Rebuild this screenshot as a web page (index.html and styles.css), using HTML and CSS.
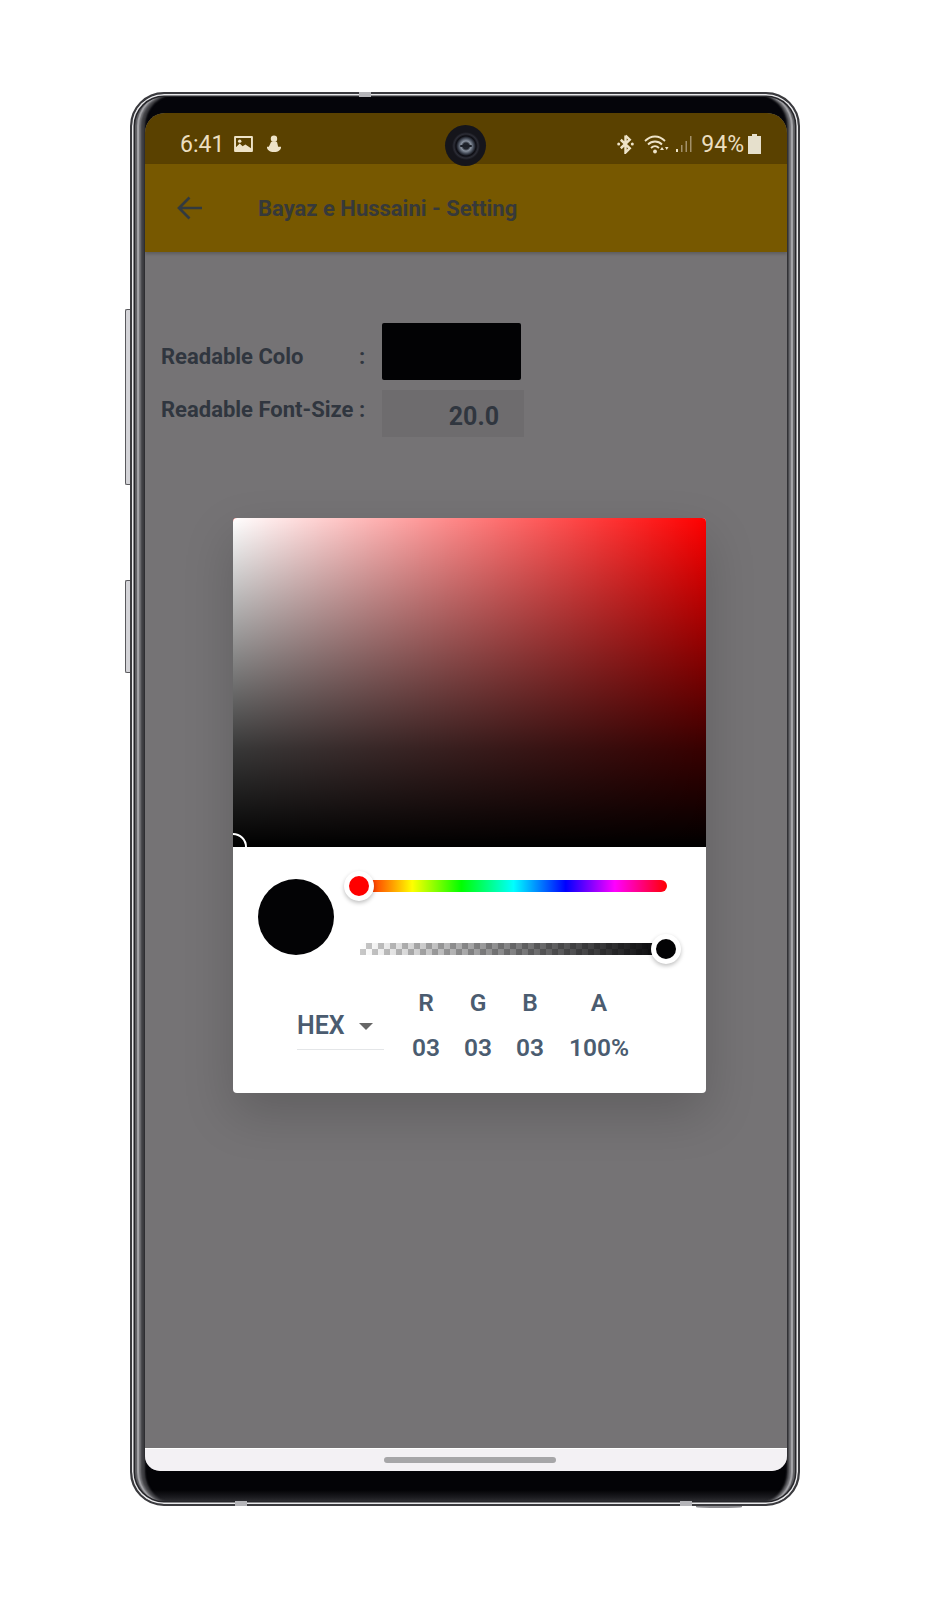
FILE: index.html
```html
<!DOCTYPE html>
<html lang="en">
<head>
<meta charset="utf-8">
<title>Bayaz e Hussaini - Setting</title>
<link rel="stylesheet" href="styles.css">
</head>
<body>
<div class="phone">
  <span class="btn btn-a"></span>
  <span class="btn btn-b"></span>
  <span class="seam seam-top"></span>
  <span class="seam seam-bl"></span>
  <span class="seam seam-br"></span>
  <span class="bulge"></span>
  <div class="screen">
    <div class="status">
      <div class="status-left">
        <span class="time">6:41</span>
        <svg class="ic-img" viewBox="0 0 20 17"><path fill-rule="evenodd" d="M1 0h18a1 1 0 0 1 1 1v15a1 1 0 0 1-1 1H1a1 1 0 0 1-1-1V1a1 1 0 0 1 1-1zM2 2v10l4-4 3 3 3-2 6 4V2z" fill="#eee3c8"/><circle cx="6" cy="5.500" r="1.800" fill="#eee3c8"/></svg>
        <svg class="ic-fig" viewBox="0 0 18 20"><circle cx="9" cy="4" r="3.600" fill="#eee3c8"/><path d="M5.500 8c2-1.500 5-1.500 7 0l1 4.500c.5 4-10.500 4-10 0z" fill="#eee3c8"/><path d="M1 13c0 3.500 3 6 8 6s8-2.500 8-6" fill="#eee3c8"/></svg>
      </div>
      <div class="camera"><span class="lens"><i class="glint"></i></span></div>
      <div class="status-right">
        <svg class="ic-bt" viewBox="0 0 18 21"><path d="M9 1.500v18l4.500-4.500L4 6M9 1.500 13.500 6 4 15" fill="none" stroke="#eee3c8" stroke-width="2.600"/><circle cx="1.800" cy="10.500" r="1.600" fill="#eee3c8"/><circle cx="16.200" cy="10.500" r="1.600" fill="#eee3c8"/></svg>
        <svg class="ic-wifi" viewBox="0 0 25 19"><path d="M1 6c6-6 14-6 20 0M4 9.500c4-4 10-4 14 0M7 13c2.500-2.500 5.500-2.500 8 0" fill="none" stroke="#eee3c8" stroke-width="1.800"/><circle cx="11" cy="16.500" r="1.900" fill="#eee3c8"/><path d="M16 15l2-3 2 3zM21 12h3.500l-1.750 3z" fill="#eee3c8"/></svg>
        <svg class="ic-sig" viewBox="0 0 17 16"><path d="M1 13h2v3H1z" fill="#eee3c8"/><path d="M6 9h1.500v7H6zM10.500 5H12v11h-1.500zM15 0h1.500v16H15z" fill="#a3916a"/></svg>
        <span class="pct">94%</span>
        <svg class="ic-bat" viewBox="0 0 13 20"><path d="M4 0h5v2h4v18H0V2h4z" fill="#e6e0cc"/></svg>
      </div>
    </div>
    <div class="appbar">
      <svg class="back" viewBox="0 0 26 24"><path d="M25 12H2M12.500 1.500 2 12l10.500 10.500" fill="none" stroke="#323a3f" stroke-width="2.700"/></svg>
      <span class="title">Bayaz e Hussaini - Setting</span>
    </div>
    <div class="content">
      <div class="settings">
        <div class="row row-color">
          <span class="lbl lbl-color">Readable Colo</span><span class="lbl colon">:</span>
          <span class="swatch"></span>
        </div>
        <div class="row row-size">
          <span class="lbl lbl-size">Readable Font-Size :</span>
          <span class="field">20.0</span>
        </div>
      </div>
      <div class="dialog">
        <div class="sv"><span class="sv-thumb"></span></div>
        <div class="controls">
          <div class="sliders">
            <span class="preview"></span>
            <div class="tracks">
              <div class="track hue"><span class="thumb thumb-hue"></span></div>
              <div class="track alpha"><span class="thumb thumb-alpha"></span></div>
            </div>
          </div>
          <div class="values">
            <div class="mode"><span>HEX</span><i class="caret"></i></div>
            <div class="channels">
              <div class="ch"><b>R</b><b>03</b></div>
              <div class="ch"><b>G</b><b>03</b></div>
              <div class="ch"><b>B</b><b>03</b></div>
              <div class="ch ch-a"><b>A</b><b>100%</b></div>
            </div>
          </div>
        </div>
      </div>
    </div>
    <div class="navbar"><span class="home"></span></div>
  </div>
</div>
</body>
</html>
```
FILE: styles.css
```css
* { box-sizing: border-box; }
html, body { margin: 0; padding: 0; background: #fff; }
body { width: 927px; height: 1600px; padding: 92px 0 0 130px; font-family: Roboto, "Liberation Sans", sans-serif; overflow: hidden; }
.phone {
  position: relative;
  width: 670px;
  height: 1414px;
  padding: 19px 0 0 13px;
  border-radius: 34px;
  border: 2px solid #3a3a3e;
  background:
    linear-gradient(to top, #3a3a3e 0, #1a1a1e 7px, #030306 14px, #030306 100%) bottom / 100% 34px no-repeat,
    #05050a;
  box-shadow:
    inset 0 0 0 1.500px #e8e8ea,
    inset 0 0 0 3px #26262a,
    inset 5px 0 1px #5c5c60,
    inset 7px 0 1px #a9a9ad,
    inset 9px 0 2px #77777b,
    inset 13px 0 2px #3e3e42,
    inset -5px 0 1px #5c5c60,
    inset -7px 0 1px #a9a9ad,
    inset -9px 0 2px #77777b,
    inset -11px 0 2px #3e3e42;
}
.btn { position: absolute; left: -7px; width: 5px; background: #d4d4d8; border: 1px solid #5a5a5e; border-right: 0; border-radius: 2px 0 0 2px; }
.btn-a { top: 215px; height: 176px; }
.btn-b { top: 486px; height: 93px; }
.seam { position: absolute; width: 12px; height: 5px; background: #b4b4b8; }
.seam-top { top: -2px; left: 227px; }
.seam-bl { bottom: -2px; left: 103px; }
.seam-br { bottom: -2px; left: 548px; }
.bulge { position: absolute; bottom: -4px; left: 564px; width: 46px; height: 2px; background: #8a8a8e; border-radius: 0 0 50% 50%; }
.screen {
  position: relative;
  display: flex; flex-direction: column;
  width: 642px; height: 1358px;
  border-radius: 20px 20px 15px 15px; overflow: hidden; background: #757375;
}
.status { position: relative; flex: 0 0 51px; background: #5a4100; display: flex; align-items: center; justify-content: space-between; padding: 11px 26px 0 35px; color: #eee3c8; }
.status-left, .status-right { display: flex; align-items: center; }
.time { font-size: 23px; width: 44px; color: #ecdfc0; }
.ic-img { width: 19px; height: 16px; margin-left: 10px; }
.ic-fig { width: 16px; height: 18px; margin-left: 13px; }
.camera { position: absolute; left: 300px; top: 12px; width: 41px; height: 41px; border-radius: 50%; background: #15151b; display: flex; align-items: center; justify-content: center; z-index: 2; }
.lens { position: relative; width: 28px; height: 28px; border-radius: 50%; background: radial-gradient(circle, #20242c 0 3px, #8a93a0 5px, #3a404c 8px, #0c0c12 10px, #2c2d36 12px, #15151b 14px); }
.glint { position: absolute; left: 8px; top: 13px; width: 12px; height: 2px; background: #1c2028; border-radius: 1px; }
.ic-bt { width: 17px; height: 20px; }
.ic-wifi { width: 25px; height: 19px; margin-left: 10px; }
.ic-sig { width: 17px; height: 16px; margin-left: 6px; }
.pct { font-size: 23px; margin-left: 9px; color: #ecdfc0; }
.ic-bat { width: 13px; height: 20px; margin-left: 4px; }
.appbar { flex: 0 0 88px; background: #775800; display: flex; align-items: center; padding-left: 32px; box-shadow: 0 2px 3px rgba(0,0,0,.2); z-index: 1; }
.back { width: 26px; height: 24px; }
.title { margin-left: 55px; font-size: 22px; font-weight: 700; color: #36393a; }
.content { flex: 1; position: relative; display: flex; flex-direction: column; }
.settings { padding: 71px 0 0 16px; }
.row { display: flex; }
.row-color { height: 57px; align-items: center; }
.lbl { font-size: 22px; font-weight: 700; color: #30363f; line-height: 26px; }
.lbl-color { width: 198px; padding-top: 10px; line-height: 36px; }
.colon { width: 23px; padding-top: 10px; line-height: 36px; }
.swatch { width: 139px; height: 57px; background: #020204; border-radius: 2px; }
.row-size { margin-top: 10px; }
.lbl-size { width: 221px; padding-top: 7px; }
.field { width: 142px; height: 47px; background: #6e6c6e; padding: 12px 25px 0 0; text-align: right; font-size: 25px; font-weight: 700; color: #30363f; line-height: 29px; }
.dialog { margin: 81px 0 0 88px; width: 473px; height: 575px; background: #fff; border-radius: 4px; overflow: hidden; box-shadow: 0 20px 50px rgba(0,0,0,.18); display: flex; flex-direction: column; }
.sv { position: relative; flex: 0 0 329px; overflow: hidden; background: linear-gradient(to bottom, rgba(0,0,0,0), rgba(0,0,0,.78) 70%, #000), linear-gradient(to right, #fff, rgba(255,255,255,0)), #f00; }
.sv-thumb { position: absolute; left: -14px; bottom: -14px; width: 28px; height: 28px; border: 2px solid #fff; border-radius: 50%; }
.controls { flex: 1; padding: 32px 0 0 25px; }
.sliders { display: flex; }
.preview { width: 76px; height: 76px; border-radius: 50%; background: #030305; }
.tracks { margin-left: 26px; width: 307px; padding-top: 1px; }
.track { position: relative; height: 12px; }
.hue { border-radius: 6px; background: linear-gradient(to right, #f00 0%, #ff0 17%, #0f0 33%, #0ff 50%, #00f 67%, #f0f 83%, #f00 100%); }
.alpha { margin-top: 51px; background: linear-gradient(to right, rgba(3,3,5,0), #030305), repeating-conic-gradient(#c8c8c8 0 25%, #fff 0 50%) 0 0 / 12px 12px; }
.thumb { position: absolute; top: 50%; width: 30px; height: 30px; margin-top: -15px; border-radius: 50%; border: 5px solid #fff; box-shadow: 0 2px 4px rgba(0,0,0,.25); }
.thumb-hue { left: -16px; background: #f00; }
.thumb-alpha { right: -14px; background: #030305; }
.values { display: flex; margin-top: 33px; }
.mode { width: 87px; margin: 23px 0 0 39px; height: 39px; border-bottom: 1px solid #e4e6e8; display: flex; align-items: flex-start; font-size: 25px; font-weight: 600; line-height: 29px; color: #4b5c70; }
.caret { width: 0; height: 0; margin: 12px 0 0 14px; border: 7.500px solid transparent; border-top: 7px solid #666; border-bottom: 0; }
.channels { display: flex; margin-left: 16px; }
.ch { width: 52px; display: flex; flex-direction: column; align-items: center; gap: 15px; font-size: 24.500px; line-height: 30px; color: #4b5c70; }
.ch b { font-weight: 600; }
.ch-a { width: 86px; }
.navbar { flex: 0 0 23px; background: #f3f1f4; display: flex; justify-content: center; padding-top: 9px; box-shadow: inset 0 1px 0 #fff; }
.home { width: 172px; height: 6px; margin-left: 7px; border-radius: 3px; background: #a6a6a8; }
```
